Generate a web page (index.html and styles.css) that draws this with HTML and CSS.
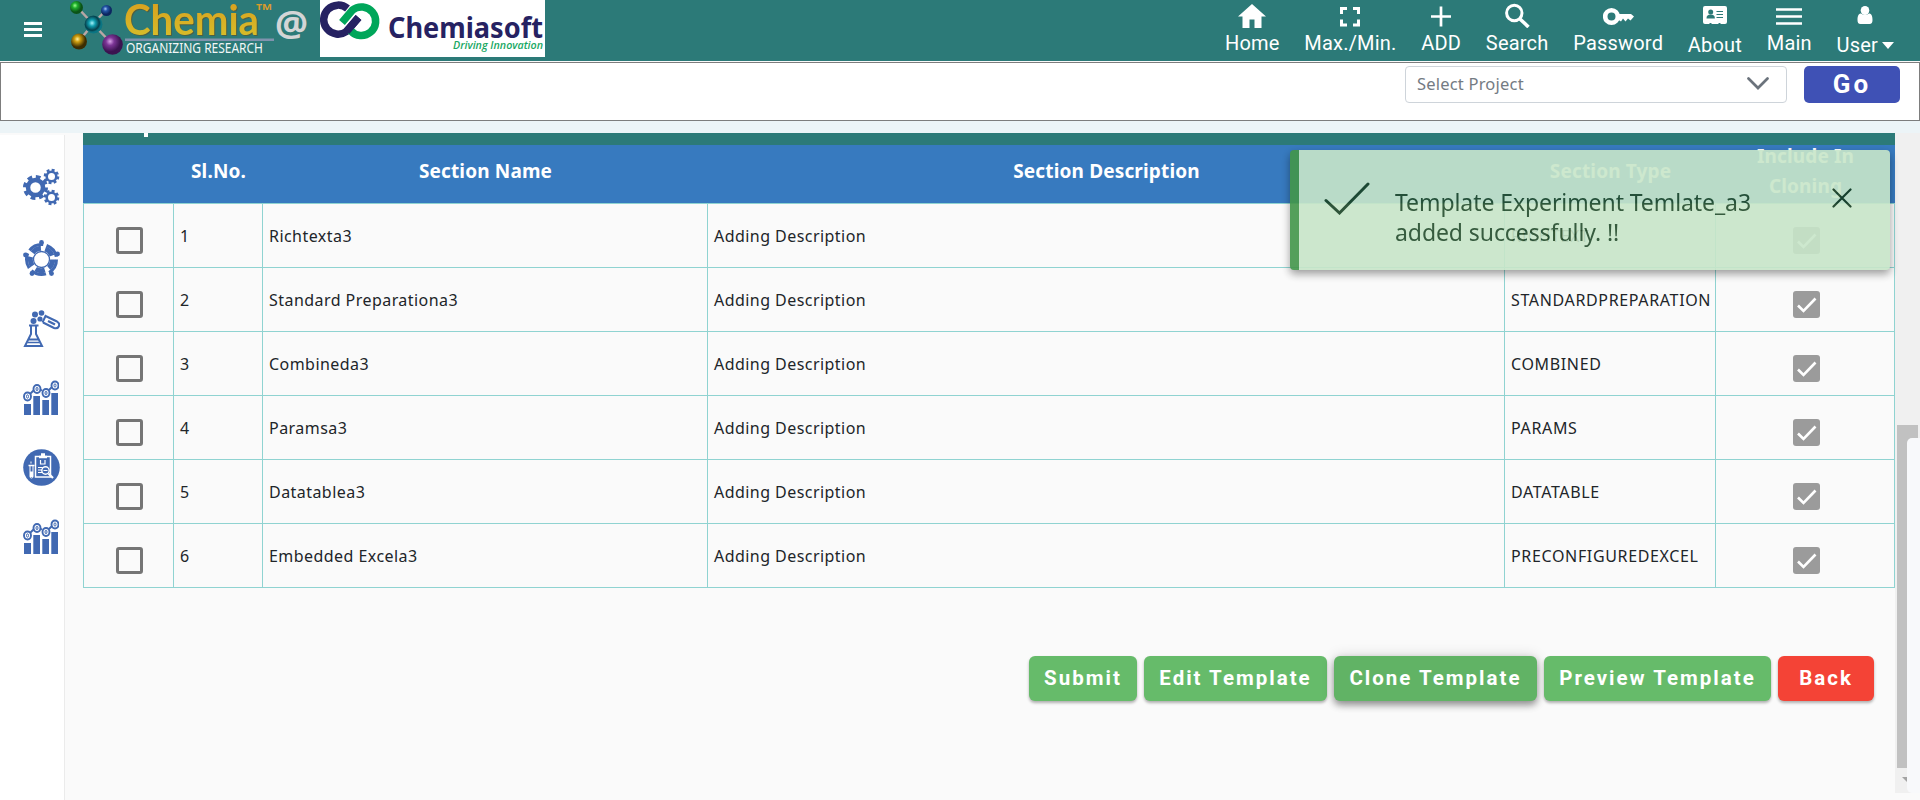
FILE: index.html
```html
<!DOCTYPE html>
<html lang="en">
<head>
<meta charset="utf-8">
<title>Chemia</title>
<link rel="stylesheet" href="styles.css">
</head>
<body>
<svg class="defs" width="0" height="0">
  <defs>
    <radialGradient id="gGreen" cx=".38" cy=".35"><stop offset="0" stop-color="#9bff8d"/><stop offset=".4" stop-color="#1fae2c"/><stop offset="1" stop-color="#0b5317"/></radialGradient>
    <radialGradient id="gBlue" cx=".4" cy=".35"><stop offset="0" stop-color="#a5c6f5"/><stop offset=".4" stop-color="#2457a8"/><stop offset="1" stop-color="#0c2660"/></radialGradient>
    <radialGradient id="gTeal" cx=".42" cy=".42"><stop offset="0" stop-color="#a6f2fa"/><stop offset=".35" stop-color="#109fb0"/><stop offset=".8" stop-color="#06404c"/><stop offset="1" stop-color="#0b7583"/></radialGradient>
    <radialGradient id="gGold" cx=".4" cy=".35"><stop offset="0" stop-color="#fff2a0"/><stop offset=".35" stop-color="#d0a010"/><stop offset="1" stop-color="#3c2d02"/></radialGradient>
    <radialGradient id="gPurple" cx=".38" cy=".35"><stop offset="0" stop-color="#d9a4e8"/><stop offset=".4" stop-color="#7c3596"/><stop offset="1" stop-color="#3b1350"/></radialGradient>
    <linearGradient id="gText" x1="0" y1="0" x2="0" y2="1"><stop offset="0" stop-color="#d99a1c"/><stop offset="1" stop-color="#d6c22c"/></linearGradient>
    <symbol id="check" viewBox="0 0 27 27"><path d="M5 14.500l5.500 5.500L22.500 7.500" fill="none" stroke="#fff" stroke-width="2.600"/></symbol>
    <symbol id="chart" viewBox="0 0 36 36">
      <g fill="#4169b2"><path d="M1 24h7v11H1zM10.300 16h6.700v19h-6.700zM19.300 20H26v15h-6.700zM28.300 13H35v22h-6.700z"/></g>
      <g fill="none" stroke="#4169b2" stroke-width="1.900"><path d="M7 14l4-4M17 9.500l2 1M26 10l3-3"/><ellipse cx="4.500" cy="16.500" rx="3.500" ry="4"/><ellipse cx="14" cy="9" rx="3.500" ry="4"/><ellipse cx="23" cy="13" rx="3.500" ry="4"/><ellipse cx="32" cy="5.500" rx="3.500" ry="4"/></g>
      <g fill="none" stroke="#4169b2" stroke-width="1"><ellipse cx="4.500" cy="16.500" rx="1" ry="1.700"/><ellipse cx="14" cy="9" rx="1" ry="1.700"/><ellipse cx="23" cy="13" rx="1" ry="1.700"/><ellipse cx="32" cy="5.500" rx="1" ry="1.700"/></g>
    </symbol>
  </defs>
</svg>

<header class="topbar">
  <svg class="burger" width="18" height="16" viewBox="0 0 18 16"><path d="M0 1.500h18M0 7.500h18M0 13.500h18" stroke="#fff" stroke-width="3"/></svg>
  <svg class="logo" width="250" height="60" viewBox="66 0 250 60">
    <g stroke="#b9a7a5" stroke-width="2.500"><path d="M77 7L93 24M106 10L93 24M79 41L93 24M112 44L93 24"/></g>
    <circle cx="76.500" cy="7.500" r="6.500" fill="url(#gGreen)"/>
    <circle cx="106.500" cy="10.500" r="5.500" fill="url(#gBlue)"/>
    <circle cx="93.500" cy="24.500" r="9" fill="url(#gTeal)"/>
    <circle cx="79" cy="41.500" r="8" fill="url(#gGold)"/>
    <circle cx="112.500" cy="44.500" r="10.300" fill="url(#gPurple)"/>
    <text class="brand" x="124" y="34.500" fill="url(#gText)" textLength="135" lengthAdjust="spacingAndGlyphs">Chemia</text>
    <text class="tm" x="256" y="9.500" textLength="16" lengthAdjust="spacingAndGlyphs">TM</text>
    <path d="M125 39.700h149" stroke="#8093ae" stroke-width="2.400"/>
    <text class="tagline" x="126" y="53.300" textLength="137" lengthAdjust="spacingAndGlyphs">ORGANIZING RESEARCH</text>
    <text class="at" x="275" y="37" textLength="33" lengthAdjust="spacingAndGlyphs">@</text>
  </svg>
  <svg class="partner" width="225" height="57" viewBox="320 0 225 57">
    <rect x="320" width="225" height="57" fill="#fff"/>
    <path d="M347.500 8.500A14.500 14.500 0 1 0 346.500 31.500L358.500 17.500" fill="none" stroke="#262262" stroke-width="7.500"/>
    <path d="M342 22.500L352.500 10A14.300 14.300 0 1 1 350.500 30.500" fill="none" stroke="#00a65a" stroke-width="7.500"/>
    <path d="M346.500 31.500L358.500 17.500" stroke="#262262" stroke-width="7.500"/>
    <text class="partner-name" x="388" y="38" textLength="155" lengthAdjust="spacingAndGlyphs">Chemiasoft</text>
    <text class="partner-tag" x="453" y="49.300" textLength="90" lengthAdjust="spacingAndGlyphs">Driving Innovation</text>
  </svg>
  <nav class="nav">
    <a class="nav-item"><svg width="28" height="28" viewBox="0 0 28 28"><path d="M14 4L0 16.500h4.500V28h7v-8.500h5V28h7V16.500H28z" fill="#fff"/></svg><span>Home</span></a>
    <a class="nav-item"><svg width="22" height="28" viewBox="0 0 22 28"><path d="M2.500 14V8.500H8M14 8.500h5.500V14M19.500 19.500V25H14M8 25H2.500v-5.500" fill="none" stroke="#fff" stroke-width="3"/></svg><span>Max./Min.</span></a>
    <a class="nav-item"><svg width="20" height="28" viewBox="0 0 20 28"><path d="M10 6.500v20M0 16.500h20" stroke="#fff" stroke-width="2.700"/></svg><span>ADD</span></a>
    <a class="nav-item"><svg width="25" height="28" viewBox="0 0 25 28"><circle cx="9.300" cy="13" r="7.700" fill="none" stroke="#fff" stroke-width="3"/><path d="M15 19l8.500 8" stroke="#fff" stroke-width="3.600"/></svg><span>Search</span></a>
    <a class="nav-item"><svg width="31" height="28" viewBox="0 0 31 28"><circle cx="8.500" cy="16.500" r="6.300" fill="none" stroke="#fff" stroke-width="4.600"/><path d="M15 14h13l3 2.500-3.500 4-2.500-2-2.500 3-2.500-3-2 3-3-2z" fill="#fff"/></svg><span>Password</span></a>
    <a class="nav-item low"><svg width="24" height="28" viewBox="0 0 24 28"><path d="M2 6h20a2 2 0 0 1 2 2v14a2 2 0 0 1-2 2h-4l-1-1h-1l-1 1H9l-1-1H7l-1 1H2a2 2 0 0 1-2-2V8a2 2 0 0 1 2-2z" fill="#fff"/><circle cx="7.700" cy="12" r="2.500" fill="#2c7a78"/><path d="M3.500 18.500c0-3 1.500-4 4.200-4s4.200 1 4.200 4z" fill="#2c7a78"/><path d="M13.500 11.500H20M13.500 14.500H20M13.500 17.500H20" stroke="#2c7a78" stroke-width="1.200"/></svg><span>About</span></a>
    <a class="nav-item"><svg width="26" height="28" viewBox="0 0 26 28"><path d="M0 9.500h26M0 16.500h26M0 23.500h26" stroke="#fff" stroke-width="2.700"/></svg><span>Main</span></a>
    <a class="nav-item user low"><svg width="16" height="28" viewBox="0 0 16 28"><ellipse cx="8" cy="10.500" rx="4.300" ry="4.600" fill="#fff"/><path d="M.5 20c0-4 1-6.500 3.500-6.500 2 1.700 6 1.700 8 0 2.500 0 3.500 2.500 3.500 6.500 0 2.500-.8 4-3 4h-9C1.300 24 .5 22.500.5 20z" fill="#fff"/></svg><span>User</span><i class="caret"></i></a>
  </nav>
</header>

<section class="project-bar">
  <div class="select"><span>Select Project</span><svg width="22" height="14" viewBox="0 0 22 14"><path d="M1.500 1.500L11 11l9.500-9.500" fill="none" stroke="#6b737c" stroke-width="2.700" stroke-linecap="round"/></svg></div>
  <button class="go">Go</button>
</section>

<div class="body">
  <aside class="side">
    <svg width="37" height="39" viewBox="0 0 37 39" fill="none" stroke="#4169b2">
      <circle cx="12.500" cy="19.500" r="7.500" stroke-width="4.500"/><circle cx="12.500" cy="19.500" r="10.500" stroke-width="4" stroke-dasharray="4.600 3.650"/>
      <circle cx="28.500" cy="8.500" r="4.800" stroke-width="2.600"/><circle cx="28.500" cy="8.500" r="6.600" stroke-width="2.400" stroke-dasharray="2.900 2.280"/>
      <circle cx="28.500" cy="29.500" r="4.800" stroke-width="2.600"/><circle cx="28.500" cy="29.500" r="6.600" stroke-width="2.400" stroke-dasharray="2.900 2.280"/>
    </svg>
    <svg width="37" height="37" viewBox="0 0 37 37" fill="none" stroke="#4169b2">
      <circle cx="18.500" cy="19.500" r="15" stroke-width="3" stroke-dasharray="15.500 3.350"/>
      <circle cx="18.500" cy="19.500" r="11.200" stroke-width="5" stroke-dasharray="9.600 4.470"/>
      <circle cx="18.500" cy="19.500" r="8" stroke-width="1.300"/>
      <g fill="#4169b2" stroke="none"><circle cx="18.500" cy="2.500" r="2.400"/><circle cx="2.500" cy="15" r="2.400"/><circle cx="34.500" cy="14" r="2.400"/><circle cx="9" cy="33.500" r="2.400"/><circle cx="28.500" cy="33.500" r="2.400"/></g>
    </svg>
    <svg width="37" height="37" viewBox="0 0 37 37" fill="none" stroke="#4169b2">
      <g fill="#4169b2" stroke="none"><circle cx="12" cy="4.500" r="3"/><circle cx="18.500" cy="3" r="2.800"/><circle cx="10.500" cy="11" r="3"/><circle cx="17" cy="9" r="2.600"/></g>
      <path d="M6 15.500h9.500M8 16v8L2 36h17l-6-12v-8M5.500 29.500h10" stroke-width="2"/><path d="M4.500 32.500h12" stroke-width="1.500"/>
      <path d="M23 5l-3.500 7.500M22.500 6L34 11.500c4 2.500 2 8-3 6.500L20 12.500" stroke-width="2"/><path d="M25 11l7 3.500" stroke-width="2.200"/>
    </svg>
    <svg width="36" height="36"><use href="#chart"/></svg>
    <svg width="37" height="37" viewBox="0 0 37 37" fill="none" stroke="#fff">
      <circle cx="18.500" cy="18.500" r="18.300" fill="#4169b2" stroke="none"/>
      <rect x="12.500" y="7.500" width="15" height="20.500" stroke-width="1.500"/><path d="M16 8h8M18 5.500h4" stroke-width="2.400"/>
      <path d="M17.500 11v4h4.500v-4M15 18.500h5M15 21h4M15 23.500h4" stroke-width="1.200"/><circle cx="22.500" cy="21.500" r="3.700" stroke-width="1.400" fill="#4169b2"/><path d="M25.500 24.500l4.500 4.500" stroke-width="2.200"/><path d="M20.500 21.500h4" stroke-width="1"/>
      <path d="M5.500 16.500h6" stroke-width="1.500"/><path d="M7 17v10.500a1.500 1.500 0 0 0 3 0V17" stroke-width="1"/><path d="M8.500 22.500v5.500" stroke-width="3"/><path d="M8 12.500v2" stroke-width="1"/>
    </svg>
    <svg width="36" height="36"><use href="#chart"/></svg>
  </aside>

  <main class="main">
    <div class="panel-title"><i></i></div>
    <table class="grid">
      <colgroup><col class="c1"><col class="c2"><col class="c3"><col class="c4"><col class="c5"><col class="c6"></colgroup>
      <thead><tr><th></th><th>Sl.No.</th><th>Section Name</th><th>Section Description</th><th>Section Type</th><th><div>Include In Cloning</div></th></tr></thead>
      <tbody>
        <tr><td><i class="box"></i></td><td>1</td><td>Richtexta3</td><td>Adding Description</td><td class="type">RICHTEXT</td><td><svg class="box on"><use href="#check"/></svg></td></tr>
        <tr><td><i class="box"></i></td><td>2</td><td>Standard Preparationa3</td><td>Adding Description</td><td class="type">STANDARDPREPARATION</td><td><svg class="box on"><use href="#check"/></svg></td></tr>
        <tr><td><i class="box"></i></td><td>3</td><td>Combineda3</td><td>Adding Description</td><td class="type">COMBINED</td><td><svg class="box on"><use href="#check"/></svg></td></tr>
        <tr><td><i class="box"></i></td><td>4</td><td>Paramsa3</td><td>Adding Description</td><td class="type">PARAMS</td><td><svg class="box on"><use href="#check"/></svg></td></tr>
        <tr><td><i class="box"></i></td><td>5</td><td>Datatablea3</td><td>Adding Description</td><td class="type">DATATABLE</td><td><svg class="box on"><use href="#check"/></svg></td></tr>
        <tr><td><i class="box"></i></td><td>6</td><td>Embedded Excela3</td><td>Adding Description</td><td class="type">PRECONFIGUREDEXCEL</td><td><svg class="box on"><use href="#check"/></svg></td></tr>
      </tbody>
    </table>
    <div class="actions">
      <button class="btn b-submit">Submit</button>
      <button class="btn b-edit">Edit Template</button>
      <button class="btn b-clone">Clone Template</button>
      <button class="btn b-preview">Preview Template</button>
      <button class="btn b-back">Back</button>
    </div>
  </main>

  <div class="scroll">
    <div class="thumb"></div>
    <svg class="arrow" width="5" height="5" viewBox="0 0 5 5"><path d="M0 0h5v5z" fill="#a3a3a3"/></svg>
    <div class="flap"></div>
  </div>
</div>

<div class="toast">
  <svg class="tick" width="46" height="33" viewBox="0 0 46 33"><path d="M2 18.500l13.500 12.500L44 2" fill="none" stroke="#1a4426" stroke-width="3" stroke-linecap="round"/></svg>
  <p>Template Experiment Temlate_a3<br>added successfully. !!</p>
  <svg class="close" width="20" height="20" viewBox="0 0 20 20"><path d="M1.500 1.500l17 17M18.500 1.500l-17 17" stroke="#12391f" stroke-width="2.200" stroke-linecap="round"/></svg>
</div>
</body>
</html>
```
FILE: styles.css
```css
* { box-sizing: border-box; }
body { margin: 0; height: 800px; overflow: hidden; display: flex; flex-direction: column; background: #fafafa; font-family: "Noto Sans", "Open Sans", sans-serif; color: #212529; }
.defs { position: absolute; }
svg { display: block; flex: none; }

.topbar { height: 61px; flex: none; background: #2c7a78; display: flex; align-items: flex-start; padding-right: 26px; }
.burger { margin: 22px 24px 0 24px; }
.partner { margin-left: 4px; }
.brand { font: 700 42px Lato, sans-serif; filter: drop-shadow(1px 1px 0 #4d5f45); }
.tm { font: 700 9px "Open Sans", sans-serif; fill: #d99a2b; }
.tagline { font: 400 13.500px "Noto Sans", sans-serif; fill: #f2f7f7; }
.at { font: 700 36px "Noto Sans", sans-serif; fill: #d3d5d6; }
.partner-name { font: 700 28px "Noto Sans", sans-serif; fill: #262262; }
.partner-tag { font: italic 600 11px "Open Sans", sans-serif; fill: #19a863; }

.nav { margin-left: auto; display: flex; gap: 24.700px; font: 400 20px/24px Roboto, sans-serif; letter-spacing: .2px; color: #fff; }
.nav-item { display: grid; justify-items: center; grid-template-rows: 28px 24px; row-gap: 3px; }
.nav-item.low { row-gap: 5px; }
.nav-item.user { grid-template-columns: auto 12px; column-gap: 4px; align-items: start; }
.user svg { grid-column: 1 / 3; }
.caret { margin-top: 9px; border: 6px solid transparent; border-top: 7px solid #fff; border-bottom: 0; }

.project-bar { height: 59px; margin-top: 1px; flex: none; border: 1px solid #7d7d7d; background: #fff; display: flex; justify-content: flex-end; gap: 17px; padding: 3px 19px 0 0; }
.select { width: 382px; height: 37px; border: 1px solid #ced4da; border-radius: 4px; display: flex; align-items: center; justify-content: space-between; padding: 0 17px 2px 11px; font-size: 16.500px; letter-spacing: .2px; color: #747b83; }
.go { width: 96px; height: 37px; border: 0; border-radius: 5px; background: #3f51b5; color: #fff; font: 700 26px/37px Roboto, sans-serif; letter-spacing: 3px; padding: 0; }

.body { flex: 1; min-height: 0; display: flex; border-top: 12px solid #ecf4f7; }
.side { width: 65px; margin-top: 2px; background: #fff; border-right: 1px solid #ebebeb; display: flex; flex-direction: column; align-items: flex-start; padding: 33px 0 0 23px; }
.side svg { margin-bottom: 33px; }
.main { margin-left: 18px; width: 1812px; }
.panel-title { height: 12px; background: #2c7a78; padding-left: 61px; }
.panel-title i { display: block; width: 4px; height: 4px; background: #fff; }

.grid { width: 1812px; table-layout: fixed; border-collapse: separate; border-spacing: 0; }
.c1 { width: 91px; } .c2 { width: 89px; } .c3 { width: 445px; } .c4 { width: 797px; } .c5 { width: 211px; } .c6 { width: 179px; }
.grid th { height: 58px; padding: 0 0 6px; background: #377abf; color: #fff; font: 700 19px/30px "Noto Sans", sans-serif; letter-spacing: .15px; white-space: nowrap; }
.grid th:last-child { white-space: normal; padding: 0; }
.grid th div { margin: -7px 30px -1px; }
.grid td { height: 64px; padding: 0 0 0 6px; border: solid #8fd3d1; border-width: 0 1px 1px 0; font-size: 16px; letter-spacing: .45px; }
.grid td:first-child { border-left-width: 1px; }
.grid tbody tr:first-child td { height: 65px; border-top-width: 1px; }
.grid td.type { letter-spacing: .65px; white-space: nowrap; }
.box { display: block; width: 27px; height: 27px; border: 3px solid #757575; border-radius: 3px; margin: 9px auto 0 26px; }
.box.on { border: 0; background: #9b9b9b; margin-left: 71px; }

.actions { display: flex; justify-content: flex-end; gap: 7px; padding: 68px 21px 0 0; }
.btn { height: 45px; padding: 0; border: 0; border-radius: 6px; background: #66bb6a; color: #fff; font: 700 20.500px/45px Roboto, sans-serif; letter-spacing: 2px; box-shadow: 0 2px 3px rgba(0,0,0,.3); white-space: nowrap; }
.b-submit { width: 108px; } .b-edit { width: 183px; }
.b-clone { width: 203px; background: #61b365; box-shadow: 0 4px 7px rgba(0,0,0,.38), 0 0 14px rgba(0,0,0,.14); }
.b-preview { width: 227px; }
.b-back { width: 96px; background: #f44336; }

.scroll { position: relative; width: 25px; height: 660px; background: #f0f0f0; padding: 292px 2px 0; }
.thumb { width: 21px; height: 343px; background: #c1c1c1; }
.arrow { margin: 9px 0 0 5px; }
.flap { position: absolute; left: 12px; top: 305px; width: 13px; height: 355px; background: #f8f9fb; border-radius: 5px 0 0 5px; }

.toast { position: absolute; left: 1290px; top: 150px; width: 600px; height: 120px; display: flex; background: #c8e6c9; border-left: 9px solid #43964a; border-radius: 4px; box-shadow: 0 4px 9px rgba(0,0,0,.42); opacity: .9; color: #224b2b; }
.tick { margin: 32px 0 0 25px; }
.toast p { width: 412px; margin: 37px 0 0 25px; font-size: 23px; line-height: 30px; letter-spacing: -.08px; white-space: nowrap; }
.close { margin: 38px 0 0 25px; }
```
